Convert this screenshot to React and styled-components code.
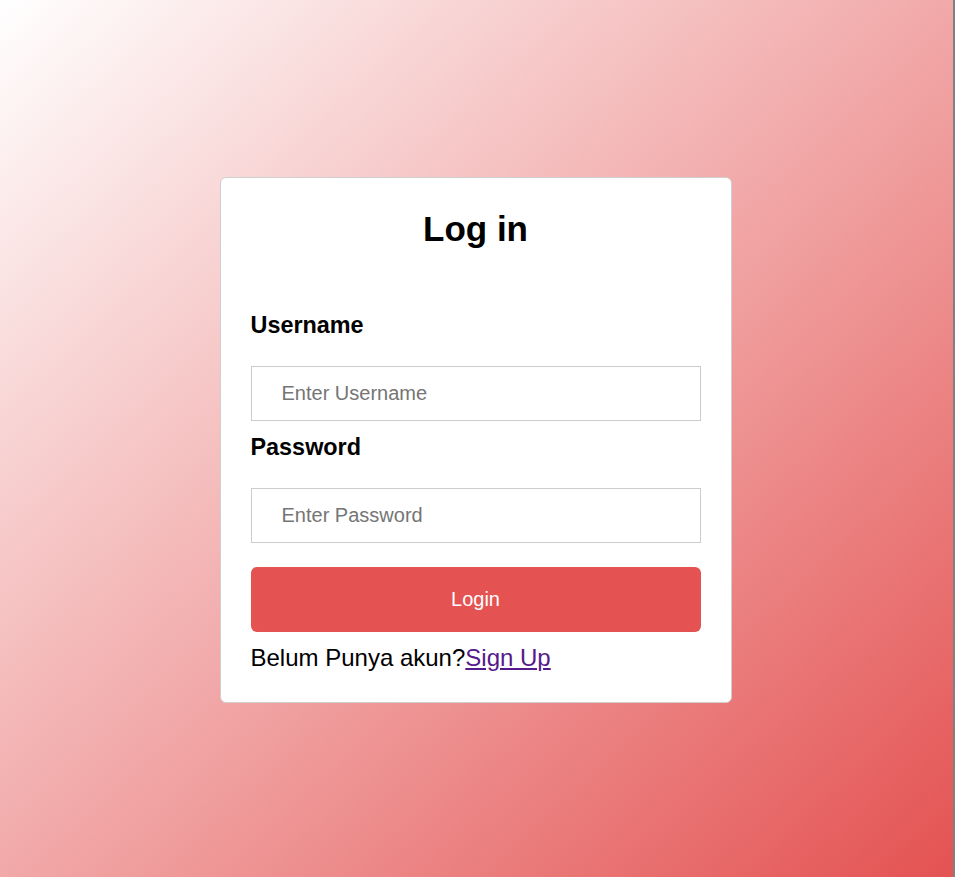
import React, { useState } from 'react';
import styled, { createGlobalStyle } from 'styled-components';

const GlobalStyle = createGlobalStyle`
  body {
    margin: 0;
    background-color: #808080;
    font-family: "Liberation Sans", Arial, sans-serif;
  }
`;

function App() {
  const [username, setUsername] = useState('');
  const [password, setPassword] = useState('');

  return (
    <>
      <GlobalStyle />
      <Background>
        <Card>
          <Title>Log in</Title>
          <Label htmlFor="username" $top={63}>Username</Label>
          <Input
            id="username"
            value={username}
            onChange={(e) => setUsername(e.target.value)}
            placeholder="Enter Username"
            $top={27}
          />
          <Label htmlFor="password" $top={13}>Password</Label>
          <Input
            id="password"
            type="password"
            value={password}
            onChange={(e) => setPassword(e.target.value)}
            placeholder="Enter Password"
            $top={27}
          />
          <LoginButton type="button">Login</LoginButton>
          <SignUpText>
            Belum Punya akun?<SignUpLink href="#signup">Sign Up</SignUpLink>
          </SignUpText>
        </Card>
      </Background>
    </>
  );
}

export default App;

const Background = styled.div`
  display: flex;
  justify-content: center;
  align-items: center;
  box-sizing: border-box;
  width: calc(100% - 2px);
  min-height: 100vh;
  padding: 2px 2px 0 0;
  background: linear-gradient(to bottom right, #ffffff 0%, #e45252 100%);
`;

const Card = styled.div`
  display: flex;
  flex-direction: column;
  width: 450px;
  padding: 29px 30px 30px;
  background-color: white;
  border: 1px solid #cfcfcf;
  border-radius: 6px;
`;

const Title = styled.h1`
  margin: 2px 0 0;
  font-size: 35px;
  line-height: 40px;
  font-weight: 700;
  text-align: center;
  color: black;
`;

const Label = styled.label`
  display: block;
  margin-top: ${(p) => p.$top}px;
  font-size: 23.4px;
  line-height: 27px;
  font-weight: 700;
  color: black;
`;

const Input = styled.input`
  width: 100%;
  height: 55px;
  margin-top: ${(p) => p.$top}px;
  padding: 0 30px;
  box-sizing: border-box;
  border: 1px solid #cccccc;
  border-radius: 0;
  outline: none;
  font-family: "Liberation Sans", Arial, sans-serif;
  font-size: 20px;
  color: black;

  &::placeholder {
    color: #757575;
  }
`;

const LoginButton = styled.button`
  width: 100%;
  height: 65px;
  margin-top: 24px;
  border: none;
  border-radius: 6px;
  background-color: #e45252;
  color: white;
  font-family: "Liberation Sans", Arial, sans-serif;
  font-size: 20px;
  cursor: pointer;
`;

const SignUpText = styled.p`
  margin: 12px 0 0;
  font-size: 24px;
  line-height: 28px;
  color: black;
`;

const SignUpLink = styled.a`
  color: #551a8b;
  text-decoration: underline;
`;
